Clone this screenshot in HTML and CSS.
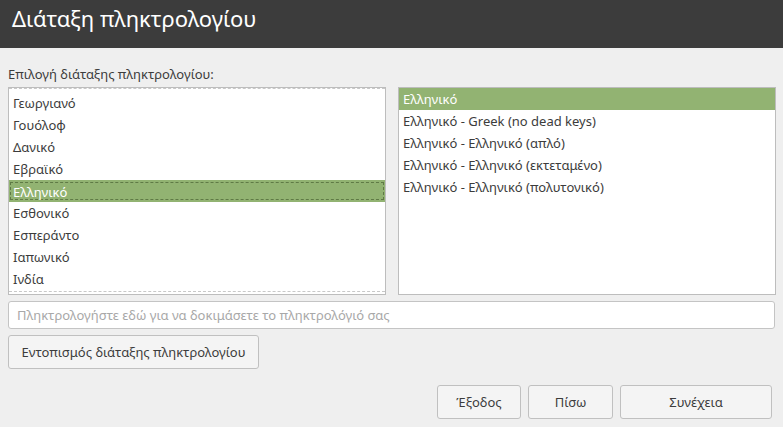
FILE: index.html
```html
<!DOCTYPE html>
<html lang="el">
<head>
    <meta charset="UTF-8">
    <title>Διάταξη πληκτρολογίου</title>
    <link rel="stylesheet" href="styles.css">
</head>
<body>

<div class="titlebar">Διάταξη πληκτρολογίου</div>

<div class="content">
    <div class="caption">Επιλογή διάταξης πληκτρολογίου:</div>

    <div class="lists">
        <div class="list list-scrolled">
            <div class="row">Γεωργιανό</div>
            <div class="row">Γουόλοφ</div>
            <div class="row">Δανικό</div>
            <div class="row">Εβραϊκό</div>
            <div class="row selected focused"><span>Ελληνικό</span></div>
            <div class="row">Εσθονικό</div>
            <div class="row">Εσπεράντο</div>
            <div class="row">Ιαπωνικό</div>
            <div class="row">Ινδία</div>
        </div>
        <div class="list">
            <div class="row selected">Ελληνικό</div>
            <div class="row">Ελληνικό - Greek (no dead keys)</div>
            <div class="row">Ελληνικό - Ελληνικό (απλό)</div>
            <div class="row">Ελληνικό - Ελληνικό (εκτεταμένο)</div>
            <div class="row">Ελληνικό - Ελληνικό (πολυτονικό)</div>
        </div>
    </div>

    <input class="test-input" type="text" placeholder="Πληκτρολογήστε εδώ για να δοκιμάσετε το πληκτρολόγιό σας">

    <button type="button" class="btn btn-detect">Εντοπισμός διάταξης πληκτρολογίου</button>

    <div class="footer">
        <button type="button" class="btn btn-quit">Έξοδος</button>
        <button type="button" class="btn btn-back">Πίσω</button>
        <button type="button" class="btn btn-next">Συνέχεια</button>
    </div>
</div>

</body>
</html>
```

FILE: styles.css
```css
body {
    margin: 0;
    background-color: #efefef;
    font-family: "Noto Sans", "DejaVu Sans", sans-serif;
    font-size: 13px;
    color: #3c3c3c;
}
.titlebar {
    height: 48px;
    box-sizing: border-box;
    padding: 4px 0 0 12px;
    background-color: #3c3c3c;
    color: #fff;
    font-size: 22px;
    line-height: 28px;
}
.content {
    padding: 0 8px 0 8px;
}
.caption {
    margin-top: 17px;
    height: 22px;
    line-height: 18px;
}
.lists {
    display: grid;
    grid-template-columns: 378px 378px;
    gap: 12px;
}
.list {
    height: 208px;
    box-sizing: border-box;
    background: #fff;
    border: 1px solid #bdbdbd;
    overflow: hidden;
}
.list-scrolled {
    padding-top: 4px;
    position: relative;
}
.list-scrolled::before,
.list-scrolled::after {
    content: "";
    position: absolute;
    left: 0;
    right: 0;
    border-top: 1px dashed #c8c8c8;
}
.list-scrolled::before {
    top: 0;
}
.list-scrolled::after {
    bottom: 2px;
}
.row {
    height: 22px;
    line-height: 22px;
    padding-left: 4px;
    color: #3c3c3c;
}
.row.selected {
    background-color: #92b372;
    color: #fff;
}
.row.focused {
    padding: 2px 1px 2px 1px;
    box-sizing: border-box;
}
.row.focused span {
    display: block;
    height: 18px;
    line-height: 18px;
    padding-left: 2px;
    border: 1px dashed #5f7a45;
    box-sizing: border-box;
}
.test-input {
    display: block;
    width: 100%;
    height: 28px;
    margin-top: 6px;
    box-sizing: border-box;
    padding: 0 8px;
    border: 1px solid #c4c4c4;
    border-radius: 3px;
    background: #fff;
    font-family: inherit;
    font-size: 13px;
    color: #3c3c3c;
}
.test-input::placeholder {
    color: #a8a8a8;
}
.btn {
    height: 34px;
    box-sizing: border-box;
    border: 1px solid #c0c0c0;
    border-radius: 3px;
    background-color: #f4f4f4;
    font-family: inherit;
    font-size: 13px;
    color: #3c3c3c;
    padding: 0;
}
.btn-detect {
    display: block;
    width: 251px;
    margin-top: 6px;
}
.footer {
    display: flex;
    justify-content: flex-end;
    gap: 7px;
    margin-top: 16px;
    padding-right: 3px;
}
.btn-quit {
    width: 84px;
}
.btn-back {
    width: 85px;
}
.btn-next {
    width: 152px;
}
```
